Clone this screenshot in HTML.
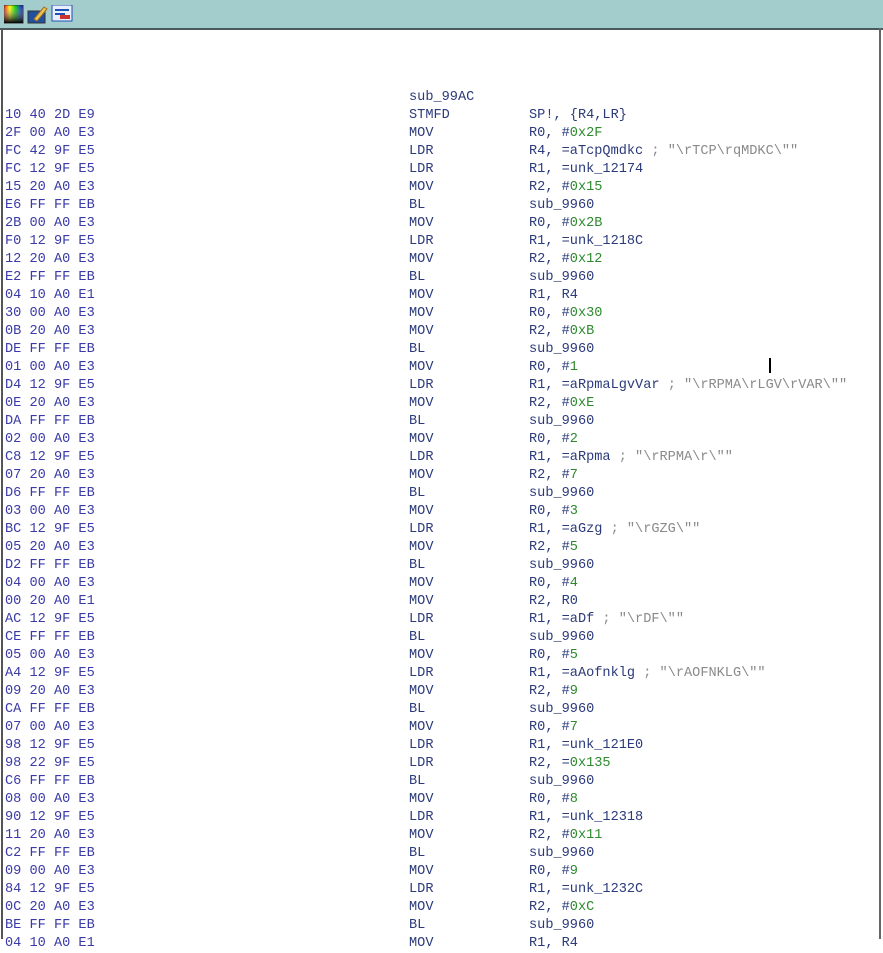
<!DOCTYPE html>
<html><head><meta charset="utf-8"><style>
body{margin:0;width:883px;height:939px;background:#fff;overflow:hidden;position:relative;font-family:"Liberation Mono",monospace;font-size:13.6px;}
#tb{position:absolute;left:0;top:0;width:883px;height:28px;background:#a3cdcd;border-bottom:2px solid #4a5a5a;}
#lb{position:absolute;left:1px;top:28px;width:2px;height:911px;background:#555;}
#rb{position:absolute;left:879px;top:28px;width:2px;height:911px;background:#666;}
#code{position:absolute;left:0;top:89px;}
.r{height:18px;line-height:18px;white-space:pre;position:relative;}
.h{position:absolute;left:5px;color:#3a3aa8;}
.m{position:absolute;left:409px;color:#2b3a7a;}
.o{position:absolute;left:529px;color:#2b3a7a;}
.n{color:#2d8a2d}.c{color:#8a8a8a}
</style></head><body>
<div id="tb">
<svg width="80" height="28" style="position:absolute;left:4px;top:5px">
<defs><linearGradient id="g" x1="0" x2="1"><stop offset="0" stop-color="#f00"/><stop offset=".3" stop-color="#ff0"/><stop offset=".6" stop-color="#0c0"/><stop offset="1" stop-color="#00f"/></linearGradient><linearGradient id="k" y1="0" y2="1" x1="0" x2="0"><stop offset="0" stop-color="#fff" stop-opacity="0"/><stop offset="1" stop-color="#000"/></linearGradient></defs>
<rect x="0" y="0" width="19" height="18" fill="url(#g)" stroke="#333"/>
<rect x="0" y="0" width="19" height="18" fill="url(#k)"/>
<rect x="24" y="6" width="17" height="12" fill="#2050a0" stroke="#333"/>
<path d="M30 14 L40 2 L43 4 L33 16 Z" fill="#f0c050" stroke="#a07020"/>
<rect x="48" y="0" width="20" height="16" fill="#e8f0ff" stroke="#2050b0"/>
<path d="M51 5 h14 M51 9 h10" stroke="#2050b0" stroke-width="2"/>
<rect x="56" y="10" width="10" height="4" fill="#d03030"/>
</svg>
</div>
<div id="lb"></div><div id="rb"></div>
<div style="position:absolute;left:769px;top:358px;width:2px;height:15px;background:#000"></div>
<div id="code">
<div class="r"><span class="m">sub_99AC</span></div>
<div class="r"><span class="h">10 40 2D E9</span><span class="m">STMFD</span><span class="o">SP!, {R4,LR}</span></div>
<div class="r"><span class="h">2F 00 A0 E3</span><span class="m">MOV</span><span class="o">R0, #<span class="n">0x2F</span></span></div>
<div class="r"><span class="h">FC 42 9F E5</span><span class="m">LDR</span><span class="o">R4, =aTcpQmdkc <span class="c">; "\rTCP\rqMDKC\""</span></span></div>
<div class="r"><span class="h">FC 12 9F E5</span><span class="m">LDR</span><span class="o">R1, =unk_12174</span></div>
<div class="r"><span class="h">15 20 A0 E3</span><span class="m">MOV</span><span class="o">R2, #<span class="n">0x15</span></span></div>
<div class="r"><span class="h">E6 FF FF EB</span><span class="m">BL</span><span class="o">sub_9960</span></div>
<div class="r"><span class="h">2B 00 A0 E3</span><span class="m">MOV</span><span class="o">R0, #<span class="n">0x2B</span></span></div>
<div class="r"><span class="h">F0 12 9F E5</span><span class="m">LDR</span><span class="o">R1, =unk_1218C</span></div>
<div class="r"><span class="h">12 20 A0 E3</span><span class="m">MOV</span><span class="o">R2, #<span class="n">0x12</span></span></div>
<div class="r"><span class="h">E2 FF FF EB</span><span class="m">BL</span><span class="o">sub_9960</span></div>
<div class="r"><span class="h">04 10 A0 E1</span><span class="m">MOV</span><span class="o">R1, R4</span></div>
<div class="r"><span class="h">30 00 A0 E3</span><span class="m">MOV</span><span class="o">R0, #<span class="n">0x30</span></span></div>
<div class="r"><span class="h">0B 20 A0 E3</span><span class="m">MOV</span><span class="o">R2, #<span class="n">0xB</span></span></div>
<div class="r"><span class="h">DE FF FF EB</span><span class="m">BL</span><span class="o">sub_9960</span></div>
<div class="r"><span class="h">01 00 A0 E3</span><span class="m">MOV</span><span class="o">R0, #<span class="n">1</span></span></div>
<div class="r"><span class="h">D4 12 9F E5</span><span class="m">LDR</span><span class="o">R1, =aRpmaLgvVar <span class="c">; "\rRPMA\rLGV\rVAR\""</span></span></div>
<div class="r"><span class="h">0E 20 A0 E3</span><span class="m">MOV</span><span class="o">R2, #<span class="n">0xE</span></span></div>
<div class="r"><span class="h">DA FF FF EB</span><span class="m">BL</span><span class="o">sub_9960</span></div>
<div class="r"><span class="h">02 00 A0 E3</span><span class="m">MOV</span><span class="o">R0, #<span class="n">2</span></span></div>
<div class="r"><span class="h">C8 12 9F E5</span><span class="m">LDR</span><span class="o">R1, =aRpma <span class="c">; "\rRPMA\r\""</span></span></div>
<div class="r"><span class="h">07 20 A0 E3</span><span class="m">MOV</span><span class="o">R2, #<span class="n">7</span></span></div>
<div class="r"><span class="h">D6 FF FF EB</span><span class="m">BL</span><span class="o">sub_9960</span></div>
<div class="r"><span class="h">03 00 A0 E3</span><span class="m">MOV</span><span class="o">R0, #<span class="n">3</span></span></div>
<div class="r"><span class="h">BC 12 9F E5</span><span class="m">LDR</span><span class="o">R1, =aGzg <span class="c">; "\rGZG\""</span></span></div>
<div class="r"><span class="h">05 20 A0 E3</span><span class="m">MOV</span><span class="o">R2, #<span class="n">5</span></span></div>
<div class="r"><span class="h">D2 FF FF EB</span><span class="m">BL</span><span class="o">sub_9960</span></div>
<div class="r"><span class="h">04 00 A0 E3</span><span class="m">MOV</span><span class="o">R0, #<span class="n">4</span></span></div>
<div class="r"><span class="h">00 20 A0 E1</span><span class="m">MOV</span><span class="o">R2, R0</span></div>
<div class="r"><span class="h">AC 12 9F E5</span><span class="m">LDR</span><span class="o">R1, =aDf <span class="c">; "\rDF\""</span></span></div>
<div class="r"><span class="h">CE FF FF EB</span><span class="m">BL</span><span class="o">sub_9960</span></div>
<div class="r"><span class="h">05 00 A0 E3</span><span class="m">MOV</span><span class="o">R0, #<span class="n">5</span></span></div>
<div class="r"><span class="h">A4 12 9F E5</span><span class="m">LDR</span><span class="o">R1, =aAofnklg <span class="c">; "\rAOFNKLG\""</span></span></div>
<div class="r"><span class="h">09 20 A0 E3</span><span class="m">MOV</span><span class="o">R2, #<span class="n">9</span></span></div>
<div class="r"><span class="h">CA FF FF EB</span><span class="m">BL</span><span class="o">sub_9960</span></div>
<div class="r"><span class="h">07 00 A0 E3</span><span class="m">MOV</span><span class="o">R0, #<span class="n">7</span></span></div>
<div class="r"><span class="h">98 12 9F E5</span><span class="m">LDR</span><span class="o">R1, =unk_121E0</span></div>
<div class="r"><span class="h">98 22 9F E5</span><span class="m">LDR</span><span class="o">R2, =<span class="n">0x135</span></span></div>
<div class="r"><span class="h">C6 FF FF EB</span><span class="m">BL</span><span class="o">sub_9960</span></div>
<div class="r"><span class="h">08 00 A0 E3</span><span class="m">MOV</span><span class="o">R0, #<span class="n">8</span></span></div>
<div class="r"><span class="h">90 12 9F E5</span><span class="m">LDR</span><span class="o">R1, =unk_12318</span></div>
<div class="r"><span class="h">11 20 A0 E3</span><span class="m">MOV</span><span class="o">R2, #<span class="n">0x11</span></span></div>
<div class="r"><span class="h">C2 FF FF EB</span><span class="m">BL</span><span class="o">sub_9960</span></div>
<div class="r"><span class="h">09 00 A0 E3</span><span class="m">MOV</span><span class="o">R0, #<span class="n">9</span></span></div>
<div class="r"><span class="h">84 12 9F E5</span><span class="m">LDR</span><span class="o">R1, =unk_1232C</span></div>
<div class="r"><span class="h">0C 20 A0 E3</span><span class="m">MOV</span><span class="o">R2, #<span class="n">0xC</span></span></div>
<div class="r"><span class="h">BE FF FF EB</span><span class="m">BL</span><span class="o">sub_9960</span></div>
<div class="r"><span class="h">04 10 A0 E1</span><span class="m">MOV</span><span class="o">R1, R4</span></div>
</div>
</body></html>
